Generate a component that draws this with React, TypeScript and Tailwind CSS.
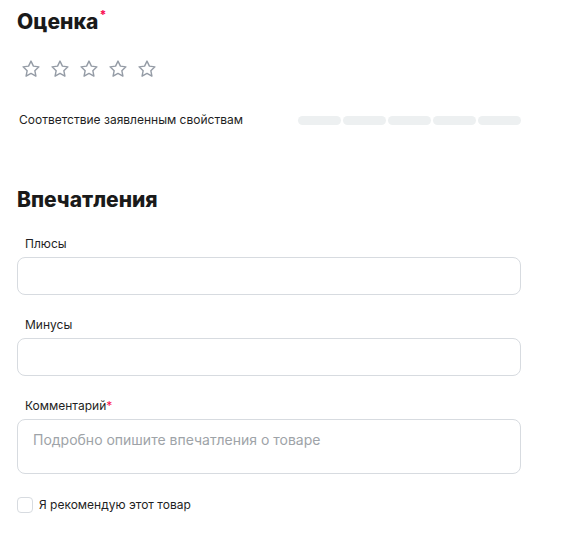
import React from "react";

const Star = () => (
  <svg width="20" height="20" viewBox="0 0 24 24" fill="none" stroke="#959ca6" strokeWidth="1.7" strokeLinejoin="round">
    <path d="M12 2.5l2.9 6.1 6.6.8-4.9 4.6 1.3 6.6L12 17.3l-5.9 3.3 1.3-6.6-4.9-4.6 6.6-.8z" />
  </svg>
);

const Field = ({ label, required, tall, placeholder }: { label: string; required?: boolean; tall?: boolean; placeholder?: string }) => (
  <div>
    <div className="pl-2 text-[12px] leading-[16px] text-[#1f1f24]">
      {label}
      {required && <span className="text-[#f91155]">*</span>}
    </div>
    <div
      className={`mt-[5px] rounded-[8px] border border-[#d7dbe0] bg-white px-[15px] ${tall ? "h-[55px] pt-[7px]" : "h-[38px]"}`}
    >
      {placeholder && <span className="text-[14px] leading-[20px] text-[#9ea3a8]">{placeholder}</span>}
    </div>
  </div>
);

export default function App() {
  return (
    <div className="min-h-[544px] w-[562px] bg-white font-['Inter',sans-serif] text-[#1f1f24]">
      <div className="ml-[17px] w-[504px] pt-[8px]">
        <h2 className="flex items-start text-[21px] font-extrabold leading-[28px] text-[#1a1a1a]">
          Оценка<span className="ml-[1px] text-[12px] leading-[14px] text-[#f91155]">*</span>
        </h2>
        <div className="mt-[23px] flex gap-[9px] pl-[4px]">
          {[0, 1, 2, 3, 4].map((i) => (
            <Star key={i} />
          ))}
        </div>
        <div className="mt-[33px] flex items-center justify-between">
          <span className="pl-[2px] text-[12px] leading-[16px]">Соответствие заявленным свойствам</span>
          <div className="flex gap-[2px]">
            {[0, 1, 2, 3, 4].map((i) => (
              <div key={i} className="h-[9px] w-[43px] rounded-full bg-[#edf0f1]" />
            ))}
          </div>
        </div>
        <h2 className="mt-[58px] text-[21px] font-extrabold leading-[28px] text-[#1a1a1a]">Впечатления</h2>
        <div className="mt-[22px] flex flex-col gap-[22px]">
          <Field label="Плюсы" />
          <Field label="Минусы" />
          <Field label="Комментарий" required tall placeholder="Подробно опишите впечатления о товаре" />
        </div>
        <label className="mt-[23px] flex items-center gap-[6px]">
          <span className="h-[16px] w-[16px] rounded-[4px] border border-[#d7dbe0]" />
          <span className="text-[12px] leading-[16px]">Я рекомендую этот товар</span>
        </label>
      </div>
    </div>
  );
}
